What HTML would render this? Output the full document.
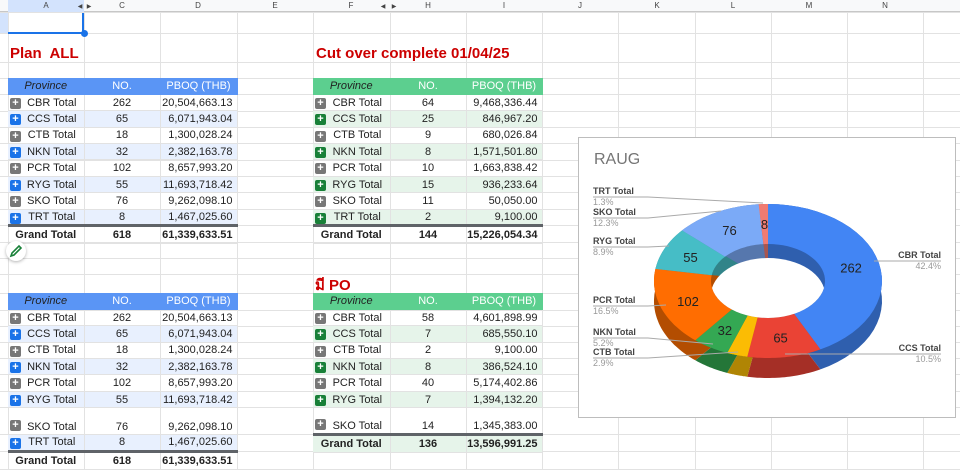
<!DOCTYPE html>
<html><head><meta charset="utf-8"><style>
*{box-sizing:border-box}
body{margin:0;width:960px;height:470px;overflow:hidden;background:#fff;font-family:"Liberation Sans",Arial,sans-serif;position:relative}
.hl{position:absolute;left:0;width:960px;height:1px;background:#e2e2e2}
.vl{position:absolute;top:0;height:470px;width:1px;background:#e2e2e2}
.colhdr{position:absolute;top:0;left:0;width:960px;height:12px;background:#f8f9fa;border-bottom:1px solid #c7c7c7;font-size:8px;color:#444}
.colhdr span{position:absolute;top:1px;transform:translateX(-50%)}
.title{position:absolute;color:#c00;font-weight:bold;font-size:15px}
table{position:absolute;border-collapse:collapse;font-size:11px;color:#222;table-layout:fixed}
td{padding:0;height:16.4px;border-right:1px solid #e2e2e2;border-bottom:1px solid #e2e2e2;white-space:nowrap;overflow:hidden}
td.p{text-align:center;padding-left:12px;position:relative}
td.n{text-align:center}
td.v{text-align:right;padding-right:4px}
tr.h td{color:#fff;text-align:center}
tr.h td:first-child{color:#222;font-style:italic;padding-left:0}
.bl tr.h td{background:#5a95f5;border-color:#5a95f5}
.gr tr.h td{background:#5ccf8f;border-color:#5ccf8f}
.bl tr.a td{background:#e8f0fe}
.gr tr.a td{background:#e6f4ea}
tr.g td{font-weight:bold;border-top:3px solid #5f6368;height:18px}
i.ic{position:absolute;left:2px;top:3px;width:11px;height:11px;border-radius:2px;background:#777;color:#fff;font-style:normal;font-weight:bold;font-size:11px;line-height:11px;text-align:center}
.bl tr.a i.ic{background:#1a73e8}
.gr tr.a i.ic{background:#188038}
</style></head><body>
<div id="grid"></div>
<div class="colhdr">
<div style="position:absolute;left:8px;top:0;width:76px;height:12px;background:#d3e3fd"></div>
<span style="left:46px">A</span><span style="left:122px">C</span><span style="left:198px">D</span><span style="left:275px">E</span><span style="left:351px">F</span><span style="left:428px">H</span><span style="left:504px">I</span><span style="left:580px">J</span><span style="left:657px">K</span><span style="left:733px">L</span><span style="left:809px">M</span><span style="left:885px">N</span>
<span style="left:80px;font-size:6px;top:3px">◀</span><span style="left:89px;font-size:6px;top:3px">▶</span>
<span style="left:383px;font-size:6px;top:3px">◀</span><span style="left:394px;font-size:6px;top:3px">▶</span>
</div>
<div style="position:absolute;left:0;top:13px;width:8px;height:20px;background:#d3e3fd"></div>
<div style="position:absolute;left:8px;top:13px;width:76px;height:21px;border-bottom:2px solid #1a73e8;border-right:2px solid #1a73e8"></div>
<div style="position:absolute;left:81px;top:30px;width:7px;height:7px;border-radius:50%;background:#1a73e8"></div>

<div class="title" style="left:10px;top:45px">Plan&nbsp; ALL</div>
<div class="title" style="left:316px;top:45px">Cut over complete 01/04/25</div>
<div class="title" style="left:315px;top:273px;font-family:'Liberation Sans','Noto Sans CJK SC',sans-serif">มี PO</div>

<table class="bl" style="left:8px;top:78px;width:229px">
<colgroup><col style="width:76px"><col style="width:76px"><col style="width:77px"></colgroup>
<tr class="h"><td>Province</td><td>NO.</td><td>PBOQ (THB)</td></tr>
<tr><td class="p"><i class="ic">+</i>CBR Total</td><td class="n">262</td><td class="v">20,504,663.13</td></tr>
<tr class="a"><td class="p"><i class="ic">+</i>CCS Total</td><td class="n">65</td><td class="v">6,071,943.04</td></tr>
<tr><td class="p"><i class="ic">+</i>CTB Total</td><td class="n">18</td><td class="v">1,300,028.24</td></tr>
<tr class="a"><td class="p"><i class="ic">+</i>NKN Total</td><td class="n">32</td><td class="v">2,382,163.78</td></tr>
<tr><td class="p"><i class="ic">+</i>PCR Total</td><td class="n">102</td><td class="v">8,657,993.20</td></tr>
<tr class="a"><td class="p"><i class="ic">+</i>RYG Total</td><td class="n">55</td><td class="v">11,693,718.42</td></tr>
<tr><td class="p"><i class="ic">+</i>SKO Total</td><td class="n">76</td><td class="v">9,262,098.10</td></tr>
<tr class="a"><td class="p"><i class="ic">+</i>TRT Total</td><td class="n">8</td><td class="v">1,467,025.60</td></tr>
<tr class="g"><td class="n">Grand Total</td><td class="n">618</td><td class="v">61,339,633.51</td></tr>
</table>

<table class="gr" style="left:313px;top:78px;width:229px">
<colgroup><col style="width:77px"><col style="width:76px"><col style="width:76px"></colgroup>
<tr class="h"><td>Province</td><td>NO.</td><td>PBOQ (THB)</td></tr>
<tr><td class="p"><i class="ic">+</i>CBR Total</td><td class="n">64</td><td class="v">9,468,336.44</td></tr>
<tr class="a"><td class="p"><i class="ic">+</i>CCS Total</td><td class="n">25</td><td class="v">846,967.20</td></tr>
<tr><td class="p"><i class="ic">+</i>CTB Total</td><td class="n">9</td><td class="v">680,026.84</td></tr>
<tr class="a"><td class="p"><i class="ic">+</i>NKN Total</td><td class="n">8</td><td class="v">1,571,501.80</td></tr>
<tr><td class="p"><i class="ic">+</i>PCR Total</td><td class="n">10</td><td class="v">1,663,838.42</td></tr>
<tr class="a"><td class="p"><i class="ic">+</i>RYG Total</td><td class="n">15</td><td class="v">936,233.64</td></tr>
<tr><td class="p"><i class="ic">+</i>SKO Total</td><td class="n">11</td><td class="v">50,050.00</td></tr>
<tr class="a"><td class="p"><i class="ic">+</i>TRT Total</td><td class="n">2</td><td class="v">9,100.00</td></tr>
<tr class="g"><td class="n">Grand Total</td><td class="n">144</td><td class="v">15,226,054.34</td></tr>
</table>

<table class="bl" style="left:8px;top:293px;width:229px">
<colgroup><col style="width:76px"><col style="width:76px"><col style="width:77px"></colgroup>
<tr class="h"><td>Province</td><td>NO.</td><td>PBOQ (THB)</td></tr>
<tr><td class="p"><i class="ic">+</i>CBR Total</td><td class="n">262</td><td class="v">20,504,663.13</td></tr>
<tr class="a"><td class="p"><i class="ic">+</i>CCS Total</td><td class="n">65</td><td class="v">6,071,943.04</td></tr>
<tr><td class="p"><i class="ic">+</i>CTB Total</td><td class="n">18</td><td class="v">1,300,028.24</td></tr>
<tr class="a"><td class="p"><i class="ic">+</i>NKN Total</td><td class="n">32</td><td class="v">2,382,163.78</td></tr>
<tr><td class="p"><i class="ic">+</i>PCR Total</td><td class="n">102</td><td class="v">8,657,993.20</td></tr>
<tr class="a"><td class="p"><i class="ic">+</i>RYG Total</td><td class="n">55</td><td class="v">11,693,718.42</td></tr>
<tr><td class="p" style="height:27px;vertical-align:bottom;padding-bottom:1px"><i class="ic" style="top:auto;bottom:3px">+</i>SKO Total</td><td class="n" style="vertical-align:bottom;padding-bottom:1px">76</td><td class="v" style="vertical-align:bottom;padding-bottom:1px">9,262,098.10</td></tr>
<tr class="a"><td class="p"><i class="ic">+</i>TRT Total</td><td class="n">8</td><td class="v">1,467,025.60</td></tr>
<tr class="g"><td class="n">Grand Total</td><td class="n">618</td><td class="v">61,339,633.51</td></tr>
</table>

<table class="gr" style="left:313px;top:293px;width:229px">
<colgroup><col style="width:77px"><col style="width:76px"><col style="width:76px"></colgroup>
<tr class="h"><td>Province</td><td>NO.</td><td>PBOQ (THB)</td></tr>
<tr><td class="p"><i class="ic">+</i>CBR Total</td><td class="n">58</td><td class="v">4,601,898.99</td></tr>
<tr class="a"><td class="p"><i class="ic">+</i>CCS Total</td><td class="n">7</td><td class="v">685,550.10</td></tr>
<tr><td class="p"><i class="ic">+</i>CTB Total</td><td class="n">2</td><td class="v">9,100.00</td></tr>
<tr class="a"><td class="p"><i class="ic">+</i>NKN Total</td><td class="n">8</td><td class="v">386,524.10</td></tr>
<tr><td class="p"><i class="ic">+</i>PCR Total</td><td class="n">40</td><td class="v">5,174,402.86</td></tr>
<tr class="a"><td class="p"><i class="ic">+</i>RYG Total</td><td class="n">7</td><td class="v">1,394,132.20</td></tr>
<tr><td class="p" style="height:27px;vertical-align:bottom;padding-bottom:1px"><i class="ic" style="top:auto;bottom:3px">+</i>SKO Total</td><td class="n" style="vertical-align:bottom;padding-bottom:1px">14</td><td class="v" style="vertical-align:bottom;padding-bottom:1px">1,345,383.00</td></tr>
<tr class="g a"><td class="n">Grand Total</td><td class="n">136</td><td class="v">13,596,991.25</td></tr>
</table>

<div style="position:absolute;left:6px;top:241px;width:20px;height:20px;border-radius:50%;background:#fff;box-shadow:0 1px 3px rgba(0,0,0,.3)">
<svg width="20" height="20" viewBox="0 0 20 20"><path d="M5 15 L6 12 L13 5 L15 7 L8 14 Z" fill="none" stroke="#188038" stroke-width="1.6"/></svg></div>

<div style="position:absolute;left:578px;top:137px;width:378px;height:281px;border:1px solid #bdbdbd;background:#fff">
<div style="position:absolute;left:15px;top:13px;font-size:16px;color:#757575">RAUG</div>
<svg id="ch" width="378" height="281" style="position:absolute;left:-1px;top:-1px;font-family:'Liberation Sans',sans-serif"></svg>
</div>

<script>
var g=document.getElementById('grid'),h='';
[12,33,62,78,94,111,127,143,160,176,192,209,225,242,258,274,293,310,326,342,358,374,391,407,434,451,469].forEach(function(y){h+='<div class="hl" style="top:'+y+'px"></div>'});
[8,84,160,237,313,390,466,542,618,695,771,847,923].forEach(function(x){h+='<div class="vl" style="left:'+x+'px"></div>'});
g.innerHTML=h;
var s=document.getElementById('ch');
var cx=190,cy=144,rx=114,ry=77,irx=57,iry=37,d=20;
var vals=[262,65,18,32,102,55,76,8],tot=618;
var col=['#4285f4','#ea4335','#fbbc04','#34a853','#ff6d01','#46bdc6','#7baaf7','#f07b72'];
var dk=['#2f5fae','#a52f26','#b08504','#247638','#b34d01','#318489','#5677ad','#a85650'];
function pt(a,r1,r2,oy){return [cx+r1*Math.sin(a),cy+oy-r2*Math.cos(a)]}
function sector(a0,a1,R1,R2,r1,r2,oy){var n=30,p=[],i,a;for(i=0;i<=n;i++){a=a0+(a1-a0)*i/n;p.push(pt(a,R1,R2,oy))}for(i=n;i>=0;i--){a=a0+(a1-a0)*i/n;p.push(pt(a,r1,r2,oy))}return 'M'+p.map(function(q){return q[0].toFixed(1)+','+q[1].toFixed(1)}).join('L')+'Z'}
var out='<defs><clipPath id="hole"><ellipse cx="'+cx+'" cy="'+cy+'" rx="'+irx+'" ry="'+iry+'"/></clipPath></defs>';
var a=0,angs=[];
vals.forEach(function(v){var b=a+v/tot*2*Math.PI;angs.push([a,b]);a=b});
angs.forEach(function(q,i){out+='<path d="'+sector(q[0],q[1],rx,ry,0,0,d)+'" fill="'+dk[i]+'"/>'});
angs.forEach(function(q,i){out+='<path d="'+sector(q[0],q[1],rx,ry,0,0,0)+'" fill="'+dk[i]+'"/>'});
angs.forEach(function(q,i){out+='<path d="'+sector(q[0],q[1],rx,ry,irx,iry,0)+'" fill="'+col[i]+'"/>'});
out+='<g clip-path="url(#hole)"><ellipse cx="'+cx+'" cy="'+(cy+14)+'" rx="'+irx+'" ry="'+iry+'" fill="#fff"/></g>';
var lab=['262','65','','32','102','55','76','8'];
angs.forEach(function(q,i){if(!lab[i])return;var m=(q[0]+q[1])/2;var p=pt(m,(rx+irx)/2,(ry+iry)/2,0);out+='<text x="'+p[0]+'" y="'+(p[1]+5)+'" text-anchor="middle" font-size="13" fill="#222">'+lab[i]+'</text>'});
var L=[['TRT Total','1.3%',15,57,[185,66]],['SKO Total','12.3%',15,78,[143,74]],['RYG Total','8.9%',15,107,[91,109]],['PCR Total','16.5%',15,166,[88,168]],['NKN Total','5.2%',15,198,[135,207]],['CTB Total','2.9%',15,218,[160,215]]];
L.forEach(function(l){out+='<text x="'+l[2]+'" y="'+l[3]+'" font-size="9" font-weight="bold" fill="#444">'+l[0]+'</text><text x="'+l[2]+'" y="'+(l[3]+11)+'" font-size="9" fill="#999">'+l[1]+'</text><line x1="'+l[2]+'" y1="'+(l[3]+3)+'" x2="70" y2="'+(l[3]+3)+'" stroke="#aaa"/><line x1="70" y1="'+(l[3]+3)+'" x2="'+l[4][0]+'" y2="'+l[4][1]+'" stroke="#aaa"/>'});
var R=[['CBR Total','42.4%',363,121,[296,124]],['CCS Total','10.5%',363,214,[207,217]]];
R.forEach(function(l){out+='<text x="'+l[2]+'" y="'+l[3]+'" text-anchor="end" font-size="9" font-weight="bold" fill="#444">'+l[0]+'</text><text x="'+l[2]+'" y="'+(l[3]+11)+'" text-anchor="end" font-size="9" fill="#999">'+l[1]+'</text><line x1="'+l[4][0]+'" y1="'+l[4][1]+'" x2="'+l[2]+'" y2="'+(l[3]+3)+'" stroke="#aaa"/>'});
s.innerHTML=out;
</script>
</body></html>
